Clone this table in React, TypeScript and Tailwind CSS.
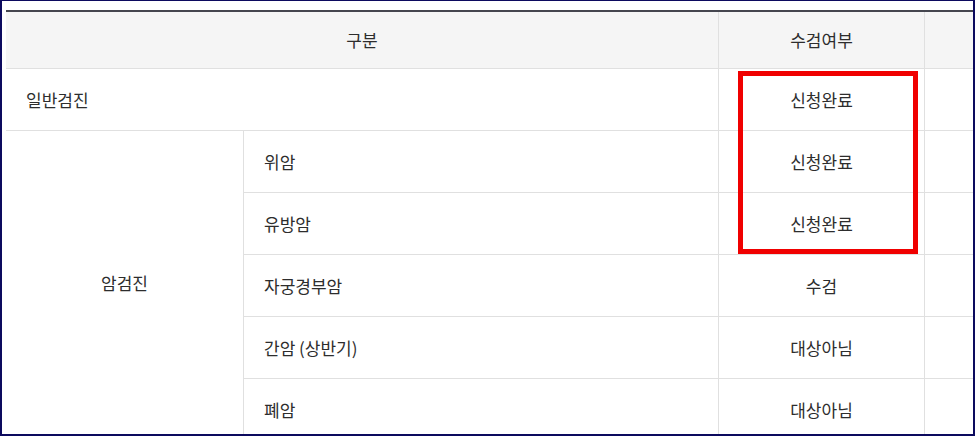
const ROWS = [
  { sub: "위암", status: "신청완료" },
  { sub: "유방암", status: "신청완료" },
  { sub: "자궁경부암", status: "수검" },
  { sub: "간암 (상반기)", status: "대상아님" },
  { sub: "폐암", status: "대상아님" },
];

const cell = "flex items-center border-b border-[#e0e0e0] text-[#2d2d2d]";

export default function App() {
  return (
    <div
      className="relative h-[436px] w-[975px] overflow-hidden border-2 border-t border-[#0c0a5e] bg-white pl-1 pt-[9px]"
      style={{ fontFamily: '"Noto Sans CJK KR", "Noto Sans", sans-serif' }}
    >
      <div className="grid w-[1010px] grid-cols-[238px_475px_206px_90px] grid-rows-[57px_repeat(6,62px)] border-t-2 border-[#45464f] text-[17px]">
        {/* header */}
        <div className={`${cell} col-span-2 justify-center border-r bg-[#f5f5f5]`}>구분</div>
        <div className={`${cell} justify-center border-r bg-[#f5f5f5]`}>수검여부</div>
        <div className={`${cell} bg-[#f5f5f5]`} />

        {/* 일반검진 */}
        <div className={`${cell} col-span-2 border-r pl-5`}>일반검진</div>
        <div className={`${cell} justify-center border-r`}>신청완료</div>
        <div className={cell} />

        {/* 암검진 */}
        <div className={`${cell} justify-center border-r pb-[6px]`} style={{ gridRow: "3 / span 5" }}>
          암검진
        </div>
        {ROWS.map((row) => (
          <div key={row.sub} className="contents">
            <div className={`${cell} border-r pl-5`}>{row.sub}</div>
            <div className={`${cell} justify-center border-r`}>{row.status}</div>
            <div className={cell} />
          </div>
        ))}
      </div>

      {/* highlight box */}
      <div className="absolute left-[736px] top-[70px] h-[183px] w-[180px] border-[5px] border-[#f00000]" />
    </div>
  );
}
